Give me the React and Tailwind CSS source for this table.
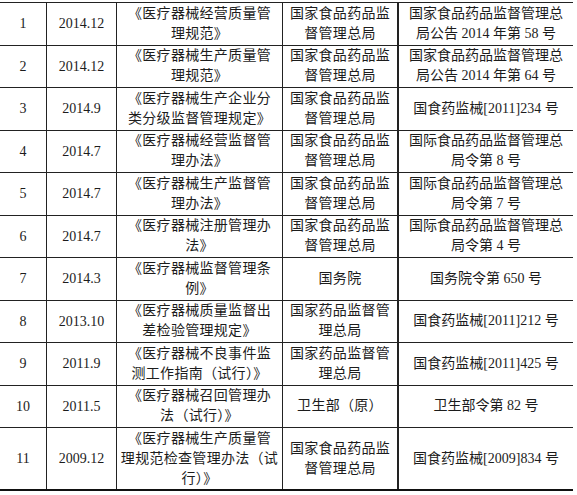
import React from 'react';

const rows = [
  { no: '1', date: '2014.12', name: ['《医疗器械经营质量管', '理规范》'], org: ['国家食品药品监', '督管理总局'], doc: ['国家食品药品监督管理总', '局公告 2014 年第 58 号'] },
  { no: '2', date: '2014.12', name: ['《医疗器械生产质量管', '理规范》'], org: ['国家食品药品监', '督管理总局'], doc: ['国家食品药品监督管理总', '局公告 2014 年第 64 号'] },
  { no: '3', date: '2014.9', name: ['《医疗器械生产企业分', '类分级监督管理规定》'], org: ['国家食品药品监', '督管理总局'], doc: ['国食药监械[2011]234 号'] },
  { no: '4', date: '2014.7', name: ['《医疗器械经营监督管', '理办法》'], org: ['国家食品药品监', '督管理总局'], doc: ['国际食品药品监督管理总', '局令第 8 号'] },
  { no: '5', date: '2014.7', name: ['《医疗器械生产监督管', '理办法》'], org: ['国家食品药品监', '督管理总局'], doc: ['国际食品药品监督管理总', '局令第 7 号'] },
  { no: '6', date: '2014.7', name: ['《医疗器械注册管理办', '法》'], org: ['国家食品药品监', '督管理总局'], doc: ['国际食品药品监督管理总', '局令第 4 号'] },
  { no: '7', date: '2014.3', name: ['《医疗器械监督管理条', '例》'], org: ['国务院'], doc: ['国务院令第 650 号'] },
  { no: '8', date: '2013.10', name: ['《医疗器械质量监督出', '差检验管理规定》'], org: ['国家药品监督管', '理总局'], doc: ['国食药监械[2011]212 号'] },
  { no: '9', date: '2011.9', name: ['《医疗器械不良事件监', '测工作指南（试行）》'], org: ['国家药品监督管', '理总局'], doc: ['国食药监械[2011]425 号'] },
  { no: '10', date: '2011.5', name: ['《医疗器械召回管理办', '法（试行）》'], org: ['卫生部（原）'], doc: ['卫生部令第 82 号'] },
  { no: '11', date: '2009.12', name: ['《医疗器械生产质量管', '理规范检查管理办法（试', '行）》'], org: ['国家食品药品监', '督管理总局'], doc: ['国食药监械[2009]834 号'], tall: true },
];

const Lines = ({ lines, className = '' }) => (
  <div className={`flex flex-col items-center leading-[20px] ${className}`}>
    {lines.map((l, i) => (
      <span key={i} className="whitespace-pre">{l}</span>
    ))}
  </div>
);

export default function App() {
  return (
    <div
      className="w-[577px] h-[495px] bg-white text-[14px] text-[#1c1c1c] overflow-hidden"
      style={{ fontFamily: '"Liberation Serif", "Noto Sans CJK SC", serif' }}
    >
      <div className="mt-[2px] w-[573px] border-b-2 border-[#111]">
        {rows.map((r) => (
          <div
            key={r.no}
            className={`flex border-t border-[#222] ${r.tall ? 'h-[62px]' : 'h-[42.5px]'}`}
          >
            <div className="w-[47px] shrink-0 border-r border-[#222] flex items-center justify-center">
              {r.no}
            </div>
            <div className="w-[70px] shrink-0 border-r border-[#222] flex items-center justify-center">
              {r.date}
            </div>
            <div className="w-[166px] shrink-0 border-r border-[#222] flex items-center justify-center tracking-[0.3px]">
              <Lines lines={r.name} />
            </div>
            <div className="w-[116px] shrink-0 border-r-2 border-[#222] flex items-center justify-center tracking-[0.3px]">
              <Lines lines={r.org} />
            </div>
            <div className="w-[174px] shrink-0 flex items-center justify-center">
              <Lines lines={r.doc} />
            </div>
          </div>
        ))}
      </div>
    </div>
  );
}
